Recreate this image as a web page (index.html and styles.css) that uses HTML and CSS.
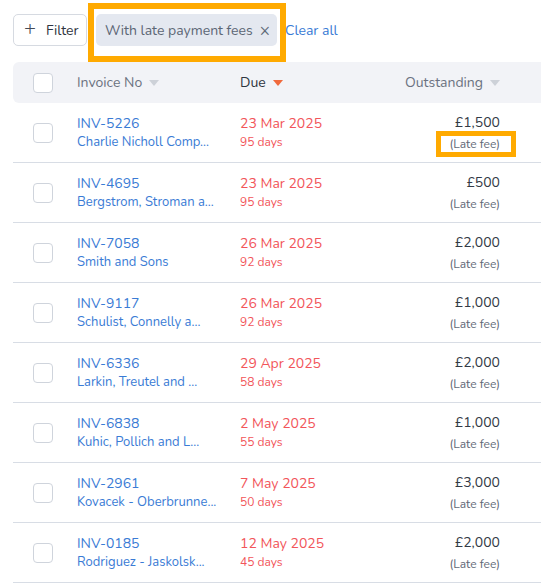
FILE: index.html
```html
<!DOCTYPE html>
<html>
<head>
<meta charset="utf-8">
<link rel="stylesheet" href="styles.css">
</head>
<body>
<div class="page">
  <div class="toolbar">
    <button class="filter-btn"><span class="plus">+</span>Filter</button>
    <span class="chip">With late payment fees <span class="chip-x">×</span></span>
    <a class="clear">Clear all</a>
    <div class="hl hl-chip"></div>
  </div>

  <div class="table">
    <div class="row head">
      <div class="cell cb"><span class="check"></span></div>
      <div class="cell">Invoice No <span class="tri"></span></div>
      <div class="cell active">Due <span class="tri on"></span></div>
      <div class="cell right">Outstanding <span class="tri"></span></div>
      <div class="cell"></div>
    </div>

    <div class="row">
      <div class="cell cb"><span class="check"></span></div>
      <div class="cell stack"><span class="inv">INV-5226</span><span class="co">Charlie Nicholl Comp...</span></div>
      <div class="cell stack"><span class="date">23 Mar 2025</span><span class="days">95 days</span></div>
      <div class="cell stack right"><span class="amt">£1,500</span><span class="fee">(Late fee)<span class="hl hl-fee"></span></span></div>
      <div class="cell"></div>
    </div>
    <div class="row">
      <div class="cell cb"><span class="check"></span></div>
      <div class="cell stack"><span class="inv">INV-4695</span><span class="co">Bergstrom, Stroman a...</span></div>
      <div class="cell stack"><span class="date">23 Mar 2025</span><span class="days">95 days</span></div>
      <div class="cell stack right"><span class="amt">£500</span><span class="fee">(Late fee)</span></div>
      <div class="cell"></div>
    </div>
    <div class="row">
      <div class="cell cb"><span class="check"></span></div>
      <div class="cell stack"><span class="inv">INV-7058</span><span class="co">Smith and Sons</span></div>
      <div class="cell stack"><span class="date">26 Mar 2025</span><span class="days">92 days</span></div>
      <div class="cell stack right"><span class="amt">£2,000</span><span class="fee">(Late fee)</span></div>
      <div class="cell"></div>
    </div>
    <div class="row">
      <div class="cell cb"><span class="check"></span></div>
      <div class="cell stack"><span class="inv">INV-9117</span><span class="co">Schulist, Connelly a...</span></div>
      <div class="cell stack"><span class="date">26 Mar 2025</span><span class="days">92 days</span></div>
      <div class="cell stack right"><span class="amt">£1,000</span><span class="fee">(Late fee)</span></div>
      <div class="cell"></div>
    </div>
    <div class="row">
      <div class="cell cb"><span class="check"></span></div>
      <div class="cell stack"><span class="inv">INV-6336</span><span class="co">Larkin, Treutel and ...</span></div>
      <div class="cell stack"><span class="date">29 Apr 2025</span><span class="days">58 days</span></div>
      <div class="cell stack right"><span class="amt">£2,000</span><span class="fee">(Late fee)</span></div>
      <div class="cell"></div>
    </div>
    <div class="row">
      <div class="cell cb"><span class="check"></span></div>
      <div class="cell stack"><span class="inv">INV-6838</span><span class="co">Kuhic, Pollich and L...</span></div>
      <div class="cell stack"><span class="date">2 May 2025</span><span class="days">55 days</span></div>
      <div class="cell stack right"><span class="amt">£1,000</span><span class="fee">(Late fee)</span></div>
      <div class="cell"></div>
    </div>
    <div class="row">
      <div class="cell cb"><span class="check"></span></div>
      <div class="cell stack"><span class="inv">INV-2961</span><span class="co">Kovacek - Oberbrunne...</span></div>
      <div class="cell stack"><span class="date">7 May 2025</span><span class="days">50 days</span></div>
      <div class="cell stack right"><span class="amt">£3,000</span><span class="fee">(Late fee)</span></div>
      <div class="cell"></div>
    </div>
    <div class="row">
      <div class="cell cb"><span class="check"></span></div>
      <div class="cell stack"><span class="inv">INV-0185</span><span class="co">Rodriguez - Jaskolsk...</span></div>
      <div class="cell stack"><span class="date">12 May 2025</span><span class="days">45 days</span></div>
      <div class="cell stack right"><span class="amt">£2,000</span><span class="fee">(Late fee)</span></div>
      <div class="cell"></div>
    </div>
  </div>
</div>
</body>
</html>
```

FILE: styles.css
```css
html, body {
  margin: 0;
  padding: 0;
  background: #ffffff;
  overflow: hidden;
}
body {
  font-family: "Nunito", "Lato", "Noto Sans", sans-serif;
  color: #333a45;
}
.page {
  padding: 14px 0 0 13px;
  width: 600px;
}
.toolbar {
  position: relative;
  display: flex;
  align-items: center;
  height: 32px;
}
.filter-btn {
  box-sizing: border-box;
  height: 32px;
  width: 74px;
  display: flex;
  align-items: center;
  padding: 0 0 0 10px;
  background: #fff;
  border: 1px solid #d6dae1;
  border-radius: 5px;
  font-family: inherit;
  font-size: 14px;
  color: #2f3540;
}
.plus {
  font-size: 20px;
  font-weight: 300;
  line-height: 1;
  margin-right: 10px;
  color: #444a55;
  position: relative;
  top: -1px;
}
.chip {
  box-sizing: border-box;
  height: 32px;
  margin-left: 9px;
  width: 181px;
  display: flex;
  align-items: center;
  padding: 0 0 0 9px;
  background: #e4e8f0;
  border-radius: 5px;
  font-size: 14px;
  color: #5c6675;
  white-space: nowrap;
}
.chip-x {
  margin-left: 7px;
  font-size: 17px;
  color: #606a78;
}
.clear {
  margin-left: 8px;
  font-size: 14px;
  color: #3a7bd5;
}
.hl {
  position: absolute;
  box-sizing: border-box;
  border: 6px solid #ffaa00;
  pointer-events: none;
}
.hl-chip {
  left: 75px;
  top: -11px;
  width: 198px;
  height: 59px;
}
.table {
  margin-top: 16px;
}
.row {
  box-sizing: border-box;
  display: grid;
  grid-template-columns: 64px 163px 1fr 133px 113px;
  height: 60px;
  border-bottom: 1px solid #d8dde5;
  align-items: center;
}
.row.head {
  height: 41px;
  background: #f2f3f7;
  border-bottom: none;
  border-radius: 6px 0 0 6px;
  font-size: 14px;
  color: #6b7280;
}
.row.head .cell {
  display: flex;
  align-items: center;
}
.row.head .cell.right {
  justify-content: flex-end;
}
.row.head .active {
  color: #2f3540;
}
.tri {
  display: inline-block;
  width: 0;
  height: 0;
  border-left: 5px solid transparent;
  border-right: 5px solid transparent;
  border-top: 6px solid #cdd1d8;
  margin-left: 7px;
}
.tri.on {
  border-top-color: #f0693c;
}
.cb {
  padding-left: 20px;
}
.check {
  display: block;
  box-sizing: border-box;
  width: 20px;
  height: 20px;
  border: 1px solid #cfd4dc;
  border-radius: 4px;
  background: #fff;
}
.stack {
  display: flex;
  flex-direction: column;
}
.right {
  text-align: right;
  align-items: flex-end;
}
.inv, .date, .amt {
  font-size: 14px;
  line-height: 18px;
}
.inv {
  color: #3a7bd5;
}
.co {
  font-size: 13px;
  line-height: 18px;
  color: #3a7bd5;
  white-space: nowrap;
}
.date {
  color: #f2555a;
}
.days {
  font-size: 12px;
  line-height: 18px;
  color: #f2555a;
}
.amt {
  color: #333a45;
}
.fee {
  position: relative;
  margin-top: 4px;
  font-size: 12px;
  line-height: 16px;
  color: #5f6876;
}
.hl-fee {
  border-width: 5px;
  left: -13px;
  top: -5px;
  width: 80px;
  height: 26px;
}
```
